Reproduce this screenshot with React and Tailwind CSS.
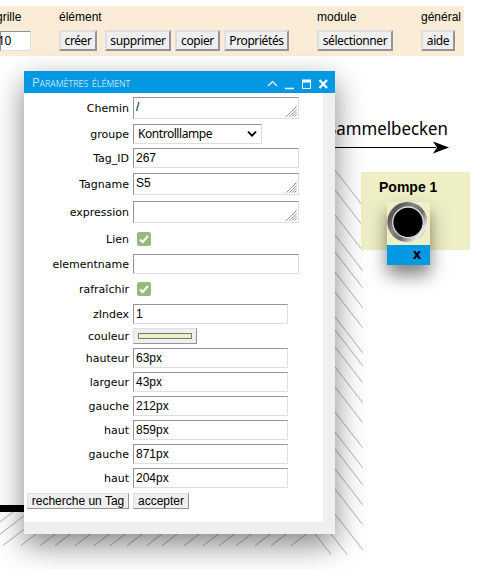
import React from 'react';

const raised = 'border-t-[#dedede] border-l-[#dedede] border-r-[#949494] border-b-[#949494] bg-[#efefef]';
const inset = 'border border-t-[#949494] border-l-[#949494] border-r-[#dedede] border-b-[#dedede] bg-white';

function Button({ className, children }) {
  return (
    <button className={`flex h-[21px] items-center justify-center border-2 font-["Noto_Sans"] text-[12px] tracking-[-0.4px] whitespace-nowrap ${raised} ${className}`}>
      {children}
    </button>
  );
}

function Toolbar() {
  return (
    <div className="mt-[6px] flex h-[50px] w-[464px] bg-[#fbecd8] text-[12px] leading-[14px]">
      <div className="w-[59px] shrink-0 pt-[4px]">
        <div className="-ml-[4px]">grille</div>
        <div className={`mt-[7px] flex h-[20px] w-[31px] items-center font-["Noto_Sans"] text-[12px] tracking-[-0.3px] ${inset}`}>
          <span className="-ml-[3px]">10</span>
        </div>
      </div>
      <div className="w-[258px] shrink-0 pt-[4px]">
        <div>élément</div>
        <div className="mt-[6px] flex">
          <Button className="w-[38px]">créer</Button>
          <Button className="ml-[8px] w-[66px]">supprimer</Button>
          <Button className="ml-[4px] w-[45px]">copier</Button>
          <Button className="ml-[4px] w-[65px]">Propriétés</Button>
        </div>
      </div>
      <div className="w-[104px] shrink-0 pt-[4px]">
        <div>module</div>
        <Button className="mt-[6px] w-[76px]">sélectionner</Button>
      </div>
      <div className="pt-[4px]">
        <div>général</div>
        <Button className="mt-[6px] w-[34px]">aide</Button>
      </div>
    </div>
  );
}

const rightHatch = [170, 190, 215, 235, 252, 272, 292, 317, 330, 347, 367, 387, 412, 432, 449, 469, 489, 514];
const bottomHatch = [-31, -15, 2.7, 20.7, 40, 55, 75, 94, 110, 127, 146.5, 162, 184, 203, 219, 236, 255, 271, 291];

function Diagram() {
  return (
    <svg className="absolute left-0 top-0" width="477" height="569">
      <g stroke="#b0b0b0" strokeWidth="1">
        {rightHatch.map((y) => <line key={y} x1="335" y1={y} x2="362.7" y2={y + 35.7} />)}
        <line x1="315" y1="534" x2="331" y2="554.5" />
        <line x1="331" y1="534" x2="347" y2="554.5" />
        {bottomHatch.map((x) => <line key={x} x1={x} y1="545.7" x2={x + 44} y2="512" />)}
      </g>
      <rect x="0" y="505" width="40" height="7" />
      <path d="M330 147.5H436" stroke="#000" />
      <path d="M449 147.5L433 141.5L437 147.5L433 153.5Z" />
      <text x="327" y="134.500" className='font-["Noto_Sans"] text-[17.5px]' textLength="121" lengthAdjust="spacingAndGlyphs">Sammelbecken</text>
    </svg>
  );
}

function Lamp() {
  return (
    <div className="absolute left-[361px] top-[172px] h-[78px] w-[109px] bg-[#efefc6]">
      <div className="ml-[18px] pt-[7px] text-[14px] font-bold leading-[16px] whitespace-nowrap">Pompe 1</div>
      <div className="mt-[7px] ml-[26px] flex h-[63px] w-[43px] flex-col bg-[#efefc6] shadow-[0_10px_18px_rgba(0,0,0,0.5)]">
        <svg className="block h-[43px] w-[43px]" viewBox="0 0 43 43">
          <defs>
            <linearGradient id="ring" x1="0" y1="0.1" x2="1" y2="0.9">
              <stop offset="0" stopColor="#aaa" /><stop offset="0.16" stopColor="#555" />
              <stop offset="0.38" stopColor="#888" /><stop offset="0.6" stopColor="#666" />
              <stop offset="0.85" stopColor="#eee" /><stop offset="1" stopColor="#555" />
            </linearGradient>
          </defs>
          <circle cx="20.300" cy="20" r="20" fill="url(#ring)" />
          <circle cx="21" cy="20.300" r="15.300" fill="#000" stroke="#ddd" strokeWidth="1.300" />
        </svg>
        <div className='h-[20px] bg-[#0398e2] pr-[9px] text-right font-["Noto_Sans"] text-[14px] font-bold leading-[18px]'>x</div>
      </div>
    </div>
  );
}

function Grip() {
  return (
    <svg className="ml-auto mt-auto mr-px mb-px block" width="11" height="11" stroke="#666" strokeDasharray="1.2 .3">
      <path d="M0.500 10.500L10.500 .5M3.500 10.500L10.500 3.500M6 10.500L10.500 6M8.500 10.500L10.500 8.500" />
    </svg>
  );
}

function Check() {
  return (
    <div className="ml-[4px] flex h-[14px] w-[14px] items-center justify-center rounded-[2px] bg-[#9bb77d]">
      <svg width="12" height="12" fill="none" stroke="#fff" strokeWidth="2"><path d="M2 6.500L4.700 9L10 3" /></svg>
    </div>
  );
}

function Field({ type, value }) {
  if (type === 'check') return <Check />;
  if (type === 'area') return <div className={`flex h-[22px] w-[166px] pl-[2px] leading-[18px] ${inset}`}>{value}<Grip /></div>;
  if (type === 'select') {
    return (
      <div className={`flex h-[20px] w-[129px] items-center justify-between pl-[4px] pr-[4px] font-["Noto_Sans"] text-[12px] tracking-[-0.45px] ${inset}`}>
        {value}
        <svg width="10" height="6" fill="none" stroke="#000" strokeWidth="1.800"><path d="M1 .7L5 4.700L9 .7" /></svg>
      </div>
    );
  }
  if (type === 'color') {
    return (
      <div className={`h-[16px] w-[64px] border p-[4px] ${raised}`}>
        <div className="h-[6px] border border-[#777] bg-[#efefc6]" />
      </div>
    );
  }
  if (type === 'wide') return <div className={`flex h-[20px] w-[166px] items-center pl-[2px] ${inset}`}>{value}</div>;
  return <div className={`flex h-[20px] w-[155px] items-center pl-[2px] ${inset}`}>{value}</div>;
}

const fields = [
  ['Chemin', 'area', '/', 'h-[26px]'],
  ['groupe', 'select', 'Kontrolllampe', 'h-[26px]'],
  ['Tag_ID', 'wide', '267', 'h-[22px]'],
  ['Tagname', 'area', 'S5', 'h-[30px]'],
  ['expression', 'area', '', 'h-[26px]'],
  ['Lien', 'check', '', 'h-[28px]'],
  ['elementname', 'wide', '', 'h-[22px]'],
  ['rafraîchir', 'check', '', 'h-[28px]'],
  ['zIndex', 'text', '1', 'h-[22px]'],
  ['couleur', 'color', '', 'h-[22px]'],
  ['hauteur', 'text', '63px', 'h-[22px]'],
  ['largeur', 'text', '43px', 'h-[26px]'],
  ['gauche', 'text', '212px', 'h-[22px]'],
  ['haut', 'text', '859px', 'h-[26px]'],
  ['gauche', 'text', '871px', 'h-[22px]'],
  ['haut', 'text', '204px', 'h-[26px]'],
];

function Panel() {
  return (
    <div className="absolute left-[24px] top-[71px] flex h-[463px] w-[311px] flex-col bg-[#efefef] shadow-[0_11px_28px_rgba(0,0,0,0.48)]">
      <div className="flex h-[22px] shrink-0 items-center justify-between bg-[#0398e2] pl-[8px] pr-[7px] text-white">
        <span className='font-["Open_Sans"] text-[13px] leading-[20px] [font-variant:small-caps] font-light whitespace-nowrap'>Paramètres élément</span>
        <svg className="mt-[3px]" width="61" height="12" fill="none" stroke="#fff">
          <path d="M1 8L5.500 3.500L10 8" strokeWidth="1.200" />
          <path d="M18 10.500H27" strokeWidth="1.500" />
          <path d="M35.500 2V10.500H43.500V2" /><path d="M35 3H44" strokeWidth="3" />
          <path d="M52.500 2L60 10M60 2L52.500 10" strokeWidth="2.200" />
        </svg>
      </div>
      <div className="h-[429px] w-[299px] bg-white pt-[2px]">
        {fields.map(([label, type, value, height], i) => (
          <div key={i} className={`flex items-center gap-[4px] text-[12px] ${height}`}>
            <div className='w-[105px] pt-[2px] text-right font-["DejaVu_Sans"] text-[11px] leading-[16px]'>{label}</div>
            <Field type={type} value={value} />
          </div>
        ))}
        <div className="mt-[2px] flex gap-[4px] pl-[3px] text-[12px]">
          <button className={`h-[16px] w-[102px] border leading-[15px] whitespace-nowrap ${raised}`}>recherche un Tag</button>
          <button className={`h-[16px] w-[56px] border leading-[15px] ${raised}`}>accepter</button>
        </div>
      </div>
    </div>
  );
}

export default function App() {
  return (
    <div className='relative flex h-[569px] w-[477px] flex-col overflow-hidden bg-white font-["Liberation_Sans"] text-black'>
      <Diagram />
      <Toolbar />
      <Lamp />
      <Panel />
    </div>
  );
}
